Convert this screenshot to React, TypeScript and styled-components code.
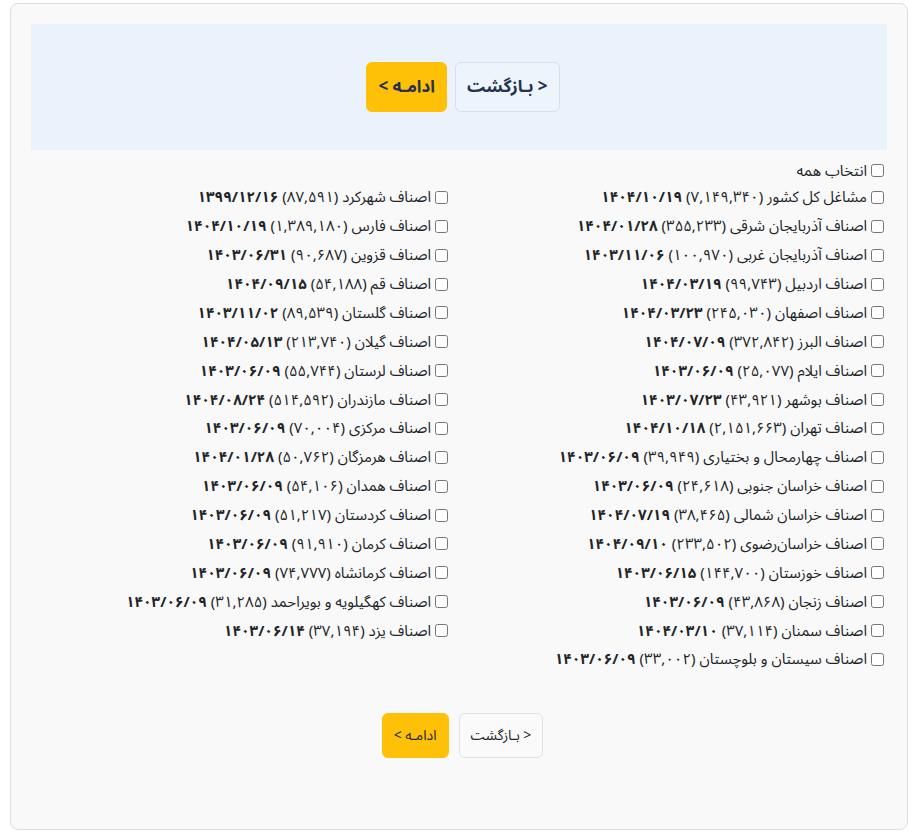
import React from "react";
import styled, { createGlobalStyle } from "styled-components";

const GlobalStyle = createGlobalStyle`
  html, body {
    margin: 0;
    padding: 0;
    background: #ffffff;
  }
  body {
    font-family: "Noto Sans Arabic", "DejaVu Sans", sans-serif;
    color: #212529;
    direction: rtl;
  }
`;

const Page = styled.div`
  padding: 3px 13px 0 10px;
`;

const Card = styled.div`
  background: #f9f9f9;
  border: 1px solid #dedede;
  border-radius: 8px;
  padding: 20px 20px 20px;
`;

const NextCard = styled.div`
  margin-top: 7px;
  height: 40px;
  border: 1px solid #e6e6e6;
  border-bottom: none;
  border-radius: 4px 4px 0 0;
  background: #fdfdfd;
`;

const ActionPanel = styled.div`
  height: 126px;
  background: #eaf3fc;
  display: flex;
  align-items: center;
  justify-content: center;
  gap: 8px;
  padding-left: 8px;
`;

const BottomActions = styled.div`
  display: flex;
  align-items: center;
  justify-content: center;
  gap: 10px;
  padding-left: 7px;
  margin: 39px 0 51px;
`;

const Button = styled.button<{ $primary?: boolean; $large?: boolean }>`
  font-family: inherit;
  direction: rtl;
  height: ${(p) => (p.$large ? "50px" : "45px")};
  padding: 0 11px;
  font-size: ${(p) => (p.$large ? "17px" : "14px")};
  font-weight: ${(p) => (p.$large ? 700 : 400)};
  color: ${(p) => (p.$large ? "#26324f" : "#212529")};
  border-radius: 6px;
  cursor: pointer;
  background: ${(p) =>
    p.$primary ? "#ffc107" : p.$large ? "#edf4fc" : "#fafafa"};
  border: 1px solid
    ${(p) => (p.$primary ? "#ffc107" : p.$large ? "#d6e0eb" : "#e2e2e2")};
`;

const List = styled.div`
  margin-top: 8px;
`;

const SelectAllRow = styled.label`
  display: flex;
  align-items: center;
  height: 25px;
  font-size: 15px;
`;

const Grid = styled.div`
  display: grid;
  grid-template-columns: 1fr 1fr;
  grid-template-rows: repeat(17, 28.875px);
  grid-auto-flow: column;
  column-gap: 16px;
`;

const Item = styled.label`
  display: flex;
  align-items: center;
  font-size: 15px;
  white-space: nowrap;
`;

const Check = styled.input.attrs({ type: "checkbox" })`
  margin: 0 3px 0 4px;
  width: 13px;
  height: 13px;
`;

const DateText = styled.b`
  font-weight: 700;
  letter-spacing: -0.4px;
`;

type Entry = { name: string; count: string; date: string };

const entries: Entry[] = [
  { name: "مشاغل کل کشور", count: "۷,۱۴۹,۳۴۰", date: "۱۴۰۴/۱۰/۱۹" },
  { name: "اصناف آذربایجان شرقی", count: "۳۵۵,۲۳۳", date: "۱۴۰۴/۰۱/۲۸" },
  { name: "اصناف آذربایجان غربی", count: "۱۰۰,۹۷۰", date: "۱۴۰۳/۱۱/۰۶" },
  { name: "اصناف اردبیل", count: "۹۹,۷۴۳", date: "۱۴۰۴/۰۳/۱۹" },
  { name: "اصناف اصفهان", count: "۲۴۵,۰۳۰", date: "۱۴۰۴/۰۳/۲۳" },
  { name: "اصناف البرز", count: "۳۷۲,۸۴۲", date: "۱۴۰۴/۰۷/۰۹" },
  { name: "اصناف ایلام", count: "۲۵,۰۷۷", date: "۱۴۰۳/۰۶/۰۹" },
  { name: "اصناف بوشهر", count: "۴۳,۹۲۱", date: "۱۴۰۳/۰۷/۲۳" },
  { name: "اصناف تهران", count: "۲,۱۵۱,۶۶۳", date: "۱۴۰۴/۱۰/۱۸" },
  { name: "اصناف چهارمحال و بختیاری", count: "۳۹,۹۴۹", date: "۱۴۰۳/۰۶/۰۹" },
  { name: "اصناف خراسان جنوبی", count: "۲۴,۶۱۸", date: "۱۴۰۳/۰۶/۰۹" },
  { name: "اصناف خراسان شمالی", count: "۳۸,۴۶۵", date: "۱۴۰۴/۰۷/۱۹" },
  { name: "اصناف خراسان‌رضوی", count: "۲۳۳,۵۰۲", date: "۱۴۰۴/۰۹/۱۰" },
  { name: "اصناف خوزستان", count: "۱۴۴,۷۰۰", date: "۱۴۰۳/۰۶/۱۵" },
  { name: "اصناف زنجان", count: "۴۳,۸۶۸", date: "۱۴۰۳/۰۶/۰۹" },
  { name: "اصناف سمنان", count: "۳۷,۱۱۴", date: "۱۴۰۴/۰۳/۱۰" },
  { name: "اصناف سیستان و بلوچستان", count: "۳۳,۰۰۲", date: "۱۴۰۳/۰۶/۰۹" },
  { name: "اصناف شهرکرد", count: "۸۷,۵۹۱", date: "۱۳۹۹/۱۲/۱۶" },
  { name: "اصناف فارس", count: "۱,۳۸۹,۱۸۰", date: "۱۴۰۴/۱۰/۱۹" },
  { name: "اصناف قزوین", count: "۹۰,۶۸۷", date: "۱۴۰۳/۰۶/۳۱" },
  { name: "اصناف قم", count: "۵۴,۱۸۸", date: "۱۴۰۴/۰۹/۱۵" },
  { name: "اصناف گلستان", count: "۸۹,۵۳۹", date: "۱۴۰۳/۱۱/۰۲" },
  { name: "اصناف گیلان", count: "۲۱۳,۷۴۰", date: "۱۴۰۴/۰۵/۱۳" },
  { name: "اصناف لرستان", count: "۵۵,۷۴۴", date: "۱۴۰۳/۰۶/۰۹" },
  { name: "اصناف مازندران", count: "۵۱۴,۵۹۲", date: "۱۴۰۴/۰۸/۲۴" },
  { name: "اصناف مرکزی", count: "۷۰,۰۰۴", date: "۱۴۰۳/۰۶/۰۹" },
  { name: "اصناف هرمزگان", count: "۵۰,۷۶۲", date: "۱۴۰۴/۰۱/۲۸" },
  { name: "اصناف همدان", count: "۵۴,۱۰۶", date: "۱۴۰۳/۰۶/۰۹" },
  { name: "اصناف کردستان", count: "۵۱,۲۱۷", date: "۱۴۰۳/۰۶/۰۹" },
  { name: "اصناف کرمان", count: "۹۱,۹۱۰", date: "۱۴۰۳/۰۶/۰۹" },
  { name: "اصناف کرمانشاه", count: "۷۴,۷۷۷", date: "۱۴۰۳/۰۶/۰۹" },
  { name: "اصناف کهگیلویه و بویراحمد", count: "۳۱,۲۸۵", date: "۱۴۰۳/۰۶/۰۹" },
  { name: "اصناف یزد", count: "۳۷,۱۹۴", date: "۱۴۰۳/۰۶/۱۴" },
];

function Actions({ large }: { large?: boolean }) {
  return (
    <>
      <Button $large={large}>{"< بـازگشت"}</Button>
      <Button $large={large} $primary>
        {"ادامـه >"}
      </Button>
    </>
  );
}

export default function App() {
  return (
    <>
      <GlobalStyle />
      <Page>
        <Card>
          <ActionPanel>
            <Actions large />
          </ActionPanel>
          <List>
            <SelectAllRow>
              <Check />
              انتخاب همه
            </SelectAllRow>
            <Grid>
              {entries.map((e) => (
                <Item key={e.name}>
                  <Check />
                  <span>
                    {e.name} ({e.count}) <DateText>{e.date}</DateText>
                  </span>
                </Item>
              ))}
            </Grid>
          </List>
          <BottomActions>
            <Actions />
          </BottomActions>
        </Card>
        <NextCard />
      </Page>
    </>
  );
}
